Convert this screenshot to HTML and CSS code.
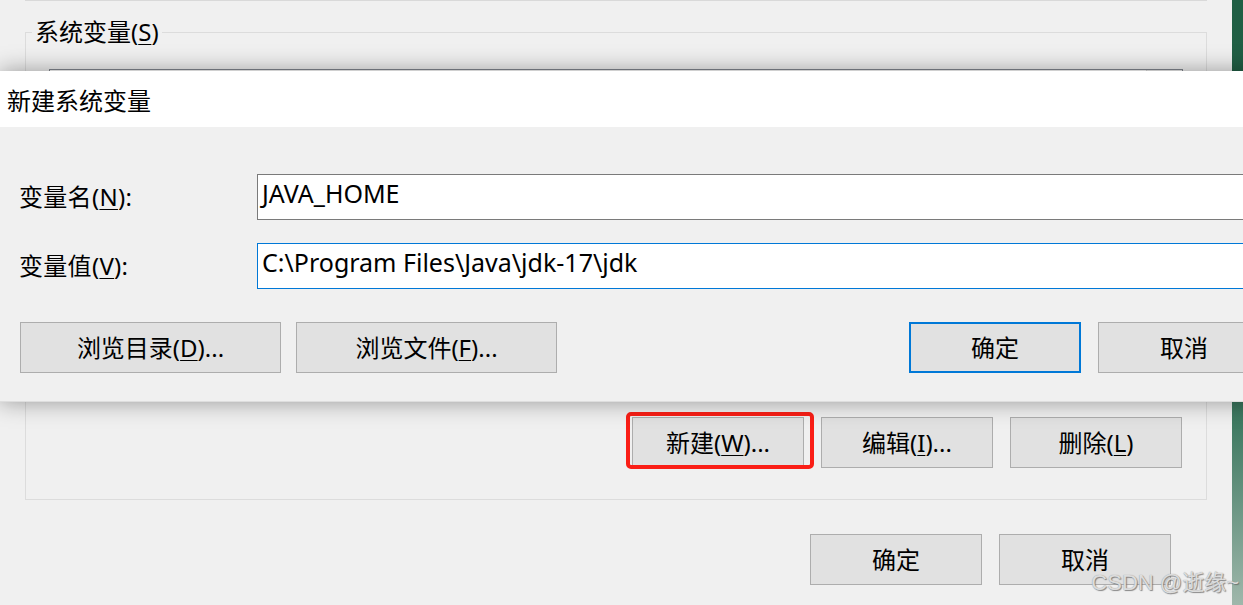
FILE: index.html
```html
<!DOCTYPE html>
<html lang="zh-CN">
<head>
<meta charset="utf-8">
<title>新建系统变量</title>
<link rel="stylesheet" href="styles.css">
</head>
<body>
<div class="screen">
  <div class="bgwin">
    <div class="prev-group"></div>
    <div class="groupbox">
      <span class="group-label">系统变量(<u>S</u>)</span>
      <div class="listbox"><div class="list-scroll"></div></div>
      <div class="group-actions">
        <div class="btn-wrap">
          <button class="btn btn-small">新建(<u>W</u>)...</button>
          <span class="highlight"></span>
        </div>
        <button class="btn btn-small">编辑(<u>I</u>)...</button>
        <button class="btn btn-small">删除(<u>L</u>)</button>
      </div>
    </div>
    <div class="win-actions">
      <button class="btn btn-small">确定</button>
      <button class="btn btn-small">取消</button>
    </div>
  </div>
  <div class="desktop"></div>

  <div class="dialog">
    <div class="titlebar">新建系统变量</div>
    <div class="dialog-body">
      <div class="field-row">
        <label class="field-label">变量名(<u>N</u>):</label>
        <div class="input">JAVA_HOME</div>
      </div>
      <div class="field-row">
        <label class="field-label">变量值(<u>V</u>):</label>
        <div class="input input-focus">C:\Program Files\Java\jdk-17\jdk</div>
      </div>
      <div class="dialog-actions">
        <div class="left-actions">
          <button class="btn btn-wide">浏览目录(<u>D</u>)...</button>
          <button class="btn btn-wide">浏览文件(<u>F</u>)...</button>
        </div>
        <div class="right-actions">
          <button class="btn btn-small btn-default">确定</button>
          <button class="btn btn-small">取消</button>
        </div>
      </div>
    </div>
  </div>

  <div class="watermark">CSDN @逝缘~</div>
</div>
</body>
</html>
```
FILE: styles.css
```css
* { box-sizing: border-box; }
html, body { margin: 0; padding: 0; }
body {
  width: 1243px;
  height: 605px;
  overflow: hidden;
  background: #f0f0f0;
  font-family: "Noto Sans", "Noto Sans CJK SC", sans-serif;
  font-size: 24px;
  color: #000;
}
u { text-decoration-thickness: 1px; text-underline-offset: 3px; }

.screen {
  position: relative;
  width: 1243px;
  height: 605px;
  display: flex;
}

.bgwin {
  width: 1232px;
  height: 605px;
  background: #f0f0f0;
  flex: none;
}
.desktop {
  flex: 1;
  background: linear-gradient(180deg, #1f5f44 0%, #245e45 45%, #3f7a62 70%, #9fb7ab 100%);
}

.prev-group {
  margin-left: 25px;
  width: 1182px;
  height: 1px;
  background: #d9d9d9;
}

.groupbox {
  position: relative;
  margin: 31px 0 0 25px;
  width: 1182px;
  height: 468px;
  border: 1px solid #dcdcdc;
  padding: 36px 24px 0 23px;
}
.group-label {
  position: absolute;
  top: -16px;
  left: 6px;
  padding: 0 3px;
  background: #f0f0f0;
  line-height: 30px;
}
.listbox {
  position: relative;
  width: 1134px;
  height: 331px;
  border: 1px solid #828790;
  background: #fff;
}
.list-scroll {
  position: absolute;
  top: 0; right: 0; bottom: 0;
  width: 36px;
  border-left: 1px solid #dcdcdc;
  background: #f0f0f0;
}
.group-actions {
  display: flex;
  justify-content: flex-end;
  gap: 17px;
  margin-top: 17px;
}
.btn-wrap { position: relative; display: flex; }
.highlight {
  position: absolute;
  top: -5px;
  left: -6px;
  right: -10px;
  bottom: -1px;
  border: 4px solid #fa1e16;
  border-radius: 5px;
}

.btn {
  font: inherit;
  color: #000;
  background: #e1e1e1;
  border: 1px solid #adadad;
  height: 51px;
  padding: 0;
  display: flex;
  align-items: center;
  justify-content: center;
  line-height: 1;
}
.btn-small { width: 172px; }
.btn-wide { width: 261px; }
.btn-default { border: 2px solid #0078d7; }

.win-actions {
  display: flex;
  justify-content: flex-end;
  gap: 17px;
  margin-top: 34px;
  padding-right: 61px;
}

.dialog {
  position: absolute;
  top: 71px;
  left: 0;
  width: 1300px;
  background: #f0f0f0;
  box-shadow: 0 0 22px rgba(0, 0, 0, 0.38);
  border-bottom: 1px solid #dedede;
}
.titlebar {
  height: 56px;
  background: #fff;
  display: flex;
  align-items: center;
  padding-left: 7px;
}
.dialog-body {
  padding: 47px 30px 28px 19px;
  display: flex;
  flex-direction: column;
}
.field-row {
  display: grid;
  grid-template-columns: 238px 1fr;
  align-items: center;
  margin-bottom: 23px;
}
.field-label { line-height: 30px; letter-spacing: 0.3px; }
.input {
  height: 46px;
  border: 1px solid #7a7a7a;
  background: #fff;
  padding: 0 0 8px 4px;
  display: flex;
  align-items: center;
  line-height: 1;
  white-space: nowrap;
  font-size: 25px;
}
.input-focus { border-color: #0078d7; }

.dialog-actions {
  display: flex;
  justify-content: space-between;
  margin-top: 10px;
  padding-left: 1px;
}
.left-actions, .right-actions {
  display: flex;
  gap: 15px;
}
.right-actions { gap: 17px; }

.watermark {
  position: absolute;
  right: 4px;
  bottom: 9px;
  font-family: "Liberation Sans", "Noto Sans CJK SC", sans-serif;
  font-size: 22px;
  color: rgba(235, 235, 235, 0.85);
  text-shadow: 0 0 1px #8a8a8a, 1px 1px 1px rgba(90, 90, 90, 0.7);
}
```
